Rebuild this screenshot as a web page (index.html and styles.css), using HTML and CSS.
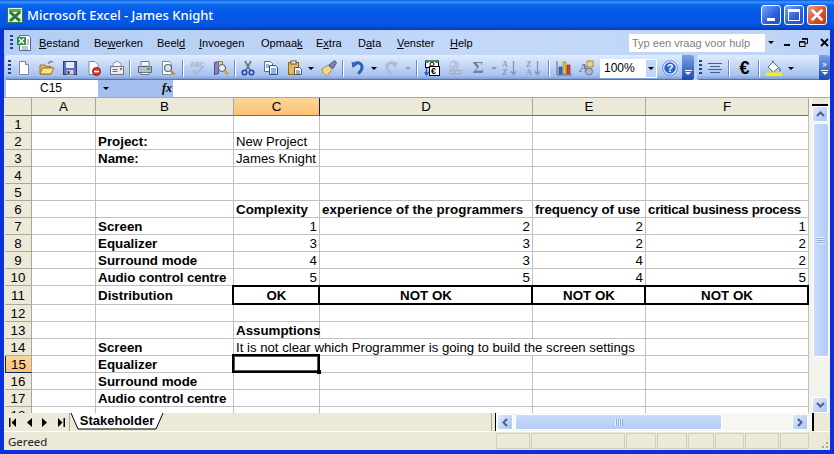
FILE: index.html
```html
<!DOCTYPE html>
<html lang="nl">
<head>
  <meta charset="UTF-8">
  <title>Microsoft Excel - James Knight</title>
  <link rel="stylesheet" href="styles.css">
</head>
<body>
  <div class="window">
    <div class="titlebar">
      <svg class="app-icon" viewBox="0 0 16 16"><rect x="0.5" y="0.5" width="15" height="15" fill="#e8f2e4" stroke="#2f7d3a"/><rect x="2" y="2" width="12" height="3" fill="#5aa85f"/><path d="M3 5l10 9M13 5L3 14" stroke="#1f7a35" stroke-width="3"/></svg>
      <span class="title-text">Microsoft Excel - James Knight</span>
      <div class="win-buttons">
        <div class="win-btn"><span class="glyph-min"></span></div>
        <div class="win-btn"><span class="glyph-max"></span></div>
        <div class="win-btn win-close"><svg viewBox="0 0 12 12" width="14" height="14"><path d="M1.5 1.5l9 9M10.5 1.5l-9 9" stroke="#fff" stroke-width="2.4"/></svg></div>
      </div>
    </div>

    <div class="client">
      <div class="menubar">
        <span class="grip"></span>
        <svg class="doc-icon" viewBox="0 0 16 18"><path d="M3.5 1.5h9l2 2v13h-11z" fill="#fff" stroke="#5a6a86"/><rect x="1" y="3" width="9" height="8" fill="#2f8f46"/><path d="M3 4.5l5 5M8 4.5l-5 5" stroke="#fff" stroke-width="1.4"/><path d="M6 13h6M6 15h6M11 6h2M11 8h2M11 10h2" stroke="#7d8ca8"/></svg>
        <nav class="menu">
          <span><u>B</u>estand</span>
          <span>Be<u>w</u>erken</span>
          <span>Beel<u>d</u></span>
          <span><u>I</u>nvoegen</span>
          <span>Opmaa<u>k</u></span>
          <span>E<u>x</u>tra</span>
          <span>D<u>a</u>ta</span>
          <span><u>V</u>enster</span>
          <span><u>H</u>elp</span>
        </nav>
        <div class="help-box">
          <span>Typ een vraag voor hulp</span>
          <span class="help-drop"><i class="dd"></i></span>
        </div>
        <div class="doc-buttons">
          <span class="doc-min"></span>
          <svg viewBox="0 0 9 9" width="9" height="9"><path d="M3 .5h5.500v5H6.500M.5 3.500h5.500v5h-5.500z" fill="none" stroke="#000"/><path d="M3 1h5.500M.5 4h5.500" stroke="#000" stroke-width="1.400"/></svg>
          <svg viewBox="0 0 9 9" width="9" height="9"><path d="M1 1l7 7M8 1l-7 7" stroke="#000" stroke-width="1.800"/></svg>
        </div>
      </div>

      <div class="toolbars">
        <div class="toolbar tb-standard">
          <span class="grip"></span>
          <!-- new -->
          <svg viewBox="0 0 16 16"><path d="M3.500 1.500h6l3 3v10h-9z" fill="#fff" stroke="#7f8aa0"/><path d="M9.500 1.500v3h3" fill="#d8deea" stroke="#7f8aa0"/></svg>
          <!-- open -->
          <svg viewBox="0 0 16 16"><path d="M1 5h5l1 1.500h5V14H1z" fill="#e6b95a" stroke="#9a7420"/><path d="M1 14l2.500-6H15l-3 6z" fill="#fbe08e" stroke="#9a7420"/><path d="M9 4c1-2 3-3 5-2" fill="none" stroke="#5a7fb8" stroke-width="1.300"/></svg>
          <!-- save -->
          <svg viewBox="0 0 16 16"><rect x="1.500" y="1.500" width="13" height="13" fill="#5d6fc0" stroke="#2d3a86"/><rect x="4" y="2" width="8" height="6" fill="#e6e9f6"/><rect x="4.500" y="10" width="7" height="4.500" fill="#d4d4d4"/><rect x="5.500" y="11" width="2" height="3" fill="#333"/></svg>
          <!-- permission -->
          <svg viewBox="0 0 16 16"><path d="M3 1.500h6l3 3v10H3z" fill="#fff" stroke="#7f8aa0"/><circle cx="10.500" cy="11.500" r="4" fill="#d8392b" stroke="#8e1c12"/><rect x="8" y="10.700" width="5" height="1.600" fill="#fff"/></svg>
          <!-- mail -->
          <svg viewBox="0 0 16 16"><path d="M4 7V3.500L8 1l4 2.500V7" fill="#f4f4f4" stroke="#8a93a5"/><rect x="1.500" y="6.500" width="13" height="8" fill="#e8ecf2" stroke="#6d7688"/><path d="M3.500 9.500h5M3.500 11.500h5" stroke="#5a6a90"/><rect x="11" y="8" width="2" height="2" fill="#d85040"/></svg>
          <span class="sep"></span>
          <!-- print -->
          <svg viewBox="0 0 16 16"><path d="M4 5V1.500h8V5" fill="#fff" stroke="#6d7688"/><path d="M1.500 6.500h13v6h-13z" fill="#b8c0cc" stroke="#5d6678"/><path d="M4 12.500h8v2H4z" fill="#fff" stroke="#6d7688"/><rect x="10" y="8" width="3" height="2" fill="#22b14c"/></svg>
          <!-- preview -->
          <svg viewBox="0 0 16 16"><path d="M2.500 1.500h7l2 2v11h-9z" fill="#fff" stroke="#7f8aa0"/><circle cx="8" cy="8" r="3.500" fill="#d6e6f6" stroke="#5d6678" stroke-width="1.200"/><path d="M10.500 10.500l4 4" stroke="#c98a2d" stroke-width="2.400"/></svg>
          <span class="sep"></span>
          <!-- spelling, disabled -->
          <svg viewBox="0 0 16 16"><text x="0" y="6.500" class="svg-abc">ABC</text><path d="M3 10l3 4 8-8" fill="none" stroke="#a9b6cf" stroke-width="2"/></svg>
          <!-- research -->
          <svg viewBox="0 0 16 16"><path d="M1.500 2.500l4-1v12l-4 1z" fill="#8d7fc0" stroke="#54488c"/><path d="M5.500 1.500h4v9h-4z" fill="#e9d78a" stroke="#8f7d3a"/><circle cx="9" cy="8" r="3.500" fill="#e6eef8" stroke="#4d5670"/><path d="M11.500 10.500l3.500 4" stroke="#d59b2d" stroke-width="2.200"/></svg>
          <span class="sep"></span>
          <!-- cut -->
          <svg viewBox="0 0 16 16"><path d="M5 1l5 9M11 1l-5 9" stroke="#6d7688" stroke-width="1.600"/><circle cx="4.500" cy="12.500" r="2.300" fill="none" stroke="#2b4aa8" stroke-width="1.600"/><circle cx="11.500" cy="12.500" r="2.300" fill="none" stroke="#2b4aa8" stroke-width="1.600"/></svg>
          <!-- copy -->
          <svg viewBox="0 0 16 16"><path d="M1.500 1.500h6l2 2v8h-8z" fill="#fff" stroke="#4d6ea8"/><path d="M6.500 5.500h6l2 2v7h-8z" fill="#fff" stroke="#1f4b98"/><path d="M8 9h5M8 11h5M8 13h5M3 5h3M3 7h3" stroke="#2f62b8"/></svg>
          <!-- paste -->
          <svg viewBox="0 0 16 16"><rect x="1.500" y="2.500" width="10" height="12" fill="#e4b75a" stroke="#8a6a20"/><rect x="4" y="1" width="5" height="3" fill="#f6f1de" stroke="#5d5d5d"/><path d="M7.500 7.500h5l2 2v5h-7z" fill="#fff" stroke="#4d5670"/><path d="M9 11h4M9 13h4" stroke="#4d5670"/></svg>
          <i class="dd"></i>
          <!-- format painter -->
          <svg viewBox="0 0 16 16"><path d="M1 9l6-4 4 4.500-4.500 6C3.500 15.500 1.500 12.500 1 9z" fill="#efd98c" stroke="#a98d3a"/><path d="M8 5l5.500-4.500 2 2-3.500 6z" fill="#7d84b8" stroke="#4a4f86"/></svg>
          <span class="sep"></span>
          <!-- undo -->
          <svg viewBox="0 0 16 16"><path d="M4.500 3.500c5-2 9 1 7 6-.6 1.500-2 3-3.500 4" fill="none" stroke="#2a62c0" stroke-width="3"/><path d="M1.500 1.500l1 6.500 5-3.500z" fill="#2a62c0"/></svg>
          <i class="dd"></i>
          <!-- redo, disabled -->
          <svg viewBox="0 0 16 16"><path d="M11.500 3.500c-5-2-9 1-7 6 .6 1.500 2 3 3.500 4" fill="none" stroke="#a9bcd8" stroke-width="3"/><path d="M14.500 1.500l-1 6.500-5-3.500z" fill="#a9bcd8"/></svg>
          <i class="dd dd-off"></i>
          <span class="sep"></span>
          <!-- euro conversion -->
          <svg viewBox="0 0 16 16"><rect x="1.500" y="1" width="13" height="6.500" fill="#fff" stroke="#000"/><rect x="1.500" y="1" width="3" height="2" fill="#12a844"/><rect x="11.500" y="1" width="3" height="2" fill="#12a844"/><circle cx="8" cy="4.200" r="2" fill="none" stroke="#000"/><rect x="5.500" y="6.500" width="10" height="9" fill="#fff" stroke="#000"/><text x="7" y="14" class="svg-euro-small">€</text><path d="M2.500 8v6M.5 12l2 3 2-3" fill="none" stroke="#1f4bd0" stroke-width="1.200"/></svg>
          <!-- hyperlink, disabled -->
          <svg viewBox="0 0 16 16"><circle cx="7" cy="5.500" r="5" fill="#b6c3d8"/><circle cx="5.500" cy="4" r="1.500" fill="#d8e0ec"/><rect x="2.500" y="10.500" width="6" height="3.500" rx="1.700" fill="none" stroke="#a3b1c9" stroke-width="1.300"/><rect x="8" y="10.500" width="6.500" height="3.500" rx="1.700" fill="none" stroke="#a3b1c9" stroke-width="1.300"/></svg>
          <span class="tb-sym">Σ</span>
          <i class="dd dd-off"></i>
          <!-- sort a-z -->
          <svg viewBox="0 0 16 16"><text x="0" y="7" class="svg-sort">A</text><text x="0" y="15" class="svg-sort">Z</text><path d="M11.500 1v13M9 11.500l2.500 3 2.500-3" fill="none" stroke="#8094b8" stroke-width="1.300"/></svg>
          <span class="spacer"></span>
          <!-- sort z-a -->
          <svg viewBox="0 0 16 16"><text x="0" y="7" class="svg-sort">Z</text><text x="0" y="15" class="svg-sort">A</text><path d="M11.500 1v13M9 11.500l2.500 3 2.500-3" fill="none" stroke="#8094b8" stroke-width="1.300"/></svg>
          <span class="sep"></span>
          <!-- chart -->
          <svg viewBox="0 0 16 16"><path d="M1 1v14h15" fill="none" stroke="#5d6678"/><rect x="3" y="7" width="3" height="7" fill="#3a66c8" stroke="#1f3a88" stroke-width=".6"/><rect x="7" y="2" width="3" height="12" fill="#e8c23a" stroke="#8f7420" stroke-width=".6"/><rect x="11" y="5" width="3" height="9" fill="#d8402b" stroke="#86201a" stroke-width=".6"/></svg>
          <!-- drawing -->
          <svg viewBox="0 0 16 16"><path d="M9 1h6v6H9z" fill="#e8d48a" stroke="#a08c3a"/><text x="1" y="12" class="svg-draw">A</text><circle cx="11" cy="11.500" r="3.500" fill="#aeb8cc" stroke="#6d7688"/></svg>
          <div class="zoom-box"><span>100%</span><span class="zoom-drop"><i class="dd"></i></span></div>
          <!-- help -->
          <svg viewBox="0 0 16 16"><circle cx="8" cy="8" r="7.300" fill="#fff" stroke="#5a86d8"/><circle cx="8" cy="8" r="5.800" fill="#2b62d0"/><text x="8" y="12" text-anchor="middle" class="svg-help">?</text></svg>
          <span class="chevron"><i class="bar"></i><i class="dd dd-white"></i></span>
        </div>
        <div class="toolbar tb-format">
          <span class="grip"></span>
          <!-- align -->
          <svg viewBox="0 0 16 16"><path d="M1 3.500h14M3 6.500h10M1 9.500h14M3 12.500h10" stroke="#4a5f90"/></svg>
          <span class="sep"></span>
          <span class="tb-euro">€</span>
          <span class="sep"></span>
          <!-- fill colour -->
          <svg viewBox="0 0 16 16"><path d="M2 7l5-5 5.500 5.500-5 4.500z" fill="#fff" stroke="#5d6678"/><path d="M7 2l-.5-1.500M13 8c1 1.500 1.500 2.500 1 3.500" fill="none" stroke="#3a66c8" stroke-width="1.300"/><rect x="0" y="12.500" width="16" height="3.500" fill="#f8f000"/></svg>
          <i class="dd"></i>
          <span class="chevron chevron-end"><i class="arrows">»</i><i class="bar"></i><i class="dd dd-white"></i></span>
        </div>
      </div>

      <div class="formula-bar">
        <div class="name-box">C15</div>
        <span class="name-drop"><i class="dd"></i></span>
        <span class="fx">fx</span>
        <div class="formula-input"></div>
      </div>

      <div class="sheet">
        <div class="grid-wrap">
          <table class="grid">
            <colgroup>
              <col class="c-head"><col class="c-a"><col class="c-b"><col class="c-c"><col class="c-d"><col class="c-e"><col class="c-f">
            </colgroup>
            <thead>
              <tr><th></th><th>A</th><th>B</th><th class="active">C</th><th>D</th><th>E</th><th>F</th></tr>
            </thead>
            <tbody>
              <tr><th>1</th><td></td><td></td><td></td><td></td><td></td><td></td></tr>
              <tr><th>2</th><td></td><td class="b">Project:</td><td>New Project</td><td></td><td></td><td></td></tr>
              <tr><th>3</th><td></td><td class="b">Name:</td><td>James Knight</td><td></td><td></td><td></td></tr>
              <tr><th>4</th><td></td><td></td><td></td><td></td><td></td><td></td></tr>
              <tr><th>5</th><td></td><td></td><td></td><td></td><td></td><td></td></tr>
              <tr><th>6</th><td></td><td></td><td class="b">Complexity</td><td class="b wide">experience of the programmers</td><td class="b tight">frequency of use</td><td class="b tighter">critical business process</td></tr>
              <tr><th>7</th><td></td><td class="b">Screen</td><td class="n">1</td><td class="n">2</td><td class="n">2</td><td class="n">1</td></tr>
              <tr><th>8</th><td></td><td class="b">Equalizer</td><td class="n">3</td><td class="n">3</td><td class="n">2</td><td class="n">2</td></tr>
              <tr><th>9</th><td></td><td class="b">Surround mode</td><td class="n">4</td><td class="n">3</td><td class="n">4</td><td class="n">2</td></tr>
              <tr><th>10</th><td></td><td class="b tight">Audio control centre</td><td class="n">5</td><td class="n">5</td><td class="n">4</td><td class="n">5</td></tr>
              <tr class="tall"><th>11</th><td></td><td class="b">Distribution</td><td class="b box">OK</td><td class="b box">NOT OK</td><td class="b box">NOT OK</td><td class="b box">NOT OK</td></tr>
              <tr><th>12</th><td></td><td></td><td></td><td></td><td></td><td></td></tr>
              <tr><th>13</th><td></td><td></td><td class="b">Assumptions</td><td></td><td></td><td></td></tr>
              <tr><th>14</th><td></td><td class="b">Screen</td><td colspan="3">It is not clear which Programmer is going to build the screen settings</td><td></td></tr>
              <tr><th class="active">15</th><td></td><td class="b">Equalizer</td><td class="selected"></td><td></td><td></td><td></td></tr>
              <tr><th>16</th><td></td><td class="b">Surround mode</td><td></td><td></td><td></td><td></td></tr>
              <tr><th>17</th><td></td><td class="b tight">Audio control centre</td><td></td><td></td><td></td><td></td></tr>
              <tr><th>18</th><td></td><td></td><td></td><td></td><td></td><td></td></tr>
            </tbody>
          </table>
        </div>
        <div class="vscroll">
          <span class="split-v"></span>
          <span class="sb-btn"><svg viewBox="0 0 9 6" width="9" height="6"><path d="M1 5l3.500-3.500L8 5" fill="none" stroke="#4d6185" stroke-width="2"/></svg></span>
          <div class="sb-track-v">
            <div class="sb-thumb-v"><i class="ridges-h"></i></div>
          </div>
          <span class="sb-btn"><svg viewBox="0 0 9 6" width="9" height="6"><path d="M1 1l3.500 3.500L8 1" fill="none" stroke="#4d6185" stroke-width="2"/></svg></span>
        </div>
      </div>

      <div class="tabs">
        <div class="tab-nav">
          <svg viewBox="0 0 7 9" width="7" height="9"><path d="M0 0h1.500v9H0zM7 0v9L2.500 4.500z"/></svg>
          <svg viewBox="0 0 5 9" width="5" height="9"><path d="M5 0v9L0 4.500z"/></svg>
          <svg viewBox="0 0 5 9" width="5" height="9"><path d="M0 0v9l5-4.500z"/></svg>
          <svg viewBox="0 0 7 9" width="7" height="9"><path d="M5.500 0H7v9H5.500zM0 0v9l4.500-4.500z"/></svg>
        </div>
        <div class="tab">
          <svg class="tab-edge" viewBox="0 0 94 17" width="94" height="17"><path d="M1 0l7 16h78l7-16" fill="#fff" stroke="#000"/></svg>
          <span>Stakeholder</span>
        </div>
        <span class="tab-rest"></span>
        <span class="split-h"></span>
        <div class="hscroll">
          <span class="sb-btn"><svg viewBox="0 0 6 9" width="6" height="9"><path d="M5 1L1.500 4.500 5 8" fill="none" stroke="#4d6185" stroke-width="2"/></svg></span>
          <div class="sb-track-h">
            <div class="sb-thumb-h"><i class="ridges-v"></i></div>
          </div>
          <span class="sb-btn"><svg viewBox="0 0 6 9" width="6" height="9"><path d="M1 1l3.500 3.500L1 8" fill="none" stroke="#4d6185" stroke-width="2"/></svg></span>
        </div>
        <span class="corner-line"></span>
      </div>

      <div class="statusbar">
        <span class="status-text">Gereed</span>
        <div class="panels">
          <span></span><span></span><span></span><span></span><span></span><span></span><span></span><span></span>
        </div>
        <i class="size-grip"></i>
      </div>
    </div>
  </div>
</body>
</html>
```

FILE: styles.css
```css
* { box-sizing: border-box; }
body { margin: 0; font-family: "Noto Sans", sans-serif; font-size: 11px; color: #000; overflow: hidden; }
i { display: block; font-style: normal; }
svg { display: block; }

.window { width: 834px; height: 454px; display: flex; flex-direction: column; background: #0831d9; overflow: hidden; }

/* title bar */
.titlebar { height: 30px; flex: none; display: flex; align-items: center; padding: 0 7px; background: linear-gradient(#0a5ae0 0, #3d95ff 2px, #0a64ec 5px, #0558e6 14px, #0556e4 24px, #0449cf 28px, #0336b4 30px); }
.app-icon { width: 16px; height: 16px; margin-right: 4px; }
.title-text { color: #fff; font-family: "Noto Sans", sans-serif; font-size: 13px; font-weight: 500; }
.win-buttons { margin-left: auto; display: flex; gap: 3px; }
.win-btn { width: 20px; height: 20px; border: 1px solid #fff; border-radius: 3px; background: linear-gradient(135deg, #7ea6f5, #2a5de0 60%, #2350d0); display: flex; align-items: center; justify-content: center; position: relative; }
.win-close { background: linear-gradient(135deg, #ef9a7e, #da4c26 60%, #c8381a); }
.glyph-min { width: 8px; height: 3px; background: #fff; position: absolute; left: 5px; bottom: 3px; }
.glyph-max { width: 12px; height: 12px; border: 1px solid #fff; border-top-width: 3px; }

.client { flex: 1; min-height: 0; margin: 0 4px 4px; display: flex; flex-direction: column; background: #c3daf9; }

/* menu bar */
.menubar { height: 25px; flex: none; display: flex; align-items: center; background: linear-gradient(90deg, #b4cdf4, #c4d9f9 60%, #bcd3f7); }
.grip { width: 3px; height: 16px; background: repeating-linear-gradient(#27418a 0 2px, transparent 2px 4px); }
.menubar .grip { margin-left: 6px; height: 15px; }
.doc-icon { width: 16px; height: 18px; margin-left: 3px; }
.menu { display: grid; grid-template-columns: 55px 63px 42px 62px 55px 42px 39px 53px 40px; margin-left: 7px; font-family: "Liberation Sans", sans-serif; font-size: 11px; white-space: nowrap; }
.menu u { text-underline-offset: 1px; }
.help-box { width: 148px; height: 18px; margin-left: 139px; background: #fff; display: flex; align-items: center; justify-content: space-between; padding-left: 3px; color: #7f7f7f; font-family: "Liberation Sans", sans-serif; font-size: 11px; white-space: nowrap; }
.help-drop { width: 12px; height: 18px; background: #c3d6f6; display: flex; align-items: center; justify-content: center; }
.doc-buttons { display: flex; align-items: center; gap: 6px; margin-left: 7px; }
.doc-min { width: 6px; height: 2px; background: #000; margin-top: 5px; margin-right: 3px; }
.doc-buttons svg:last-child { margin-left: 6px; }

.dd { width: 0; height: 0; border: 3px solid transparent; border-top-color: #000; border-bottom-width: 0; border-left-width: 3.500px; border-right-width: 3.500px; justify-self: center; }
.dd-off { border-top-color: #8a98b0; }
.dd-white { border-top-color: #fff; }

/* toolbars */
.toolbars { height: 25px; flex: none; display: flex; padding-left: 1px; background: linear-gradient(90deg, #a9c4f0, #c4d9f9 50%, #b4cdf4); }
.toolbar { height: 25px; align-items: center; border-radius: 3px; background: linear-gradient(#e2ecfc, #c6d9f8 40%, #a7c2ee 85%, #7f9fd8); border-bottom: 1px solid #4f74b8; }
.tb-standard { width: 690px; display: grid; grid-template-columns: 7px 23px 23px 24px 24px 21px 6px 23px 24px 6px 23px 23px 5px 21px 25px 23px 10px 26px 2px 28px 4px 30px 4px 14px 16px 30px 16px 16px 16px 8px 16px 14px 16px 28px 57px 25px 12px; justify-items: center; }
.tb-standard > svg { width: 16px; height: 16px; }
.tb-standard > .grip { justify-self: start; margin-left: 3px; }
.sep { width: 2px; height: 17px; border-left: 1px solid #6a8ccb; border-right: 1px solid #fff; }
.spacer { width: 8px; }
.tb-sym { font-family: "Liberation Serif", serif; font-size: 17px; font-weight: 700; color: #6d80a8; line-height: 16px; }
.svg-abc { font: 700 6.500px "Liberation Sans", sans-serif; fill: #a9b0c0; }
.svg-sort { font: 700 8px "Liberation Serif", serif; fill: #8a9abb; }
.svg-euro-small { font: 700 9px "Liberation Sans", sans-serif; fill: #000; }
.svg-draw { font: 700 13px "Liberation Serif", serif; fill: #6a70a8; }
.svg-help { font: 700 11px "Liberation Sans", sans-serif; fill: #fff; }
.zoom-box { width: 57px; height: 19px; background: #fff; display: flex; align-items: center; justify-content: space-between; padding-left: 4px; font-family: "Liberation Sans", sans-serif; font-size: 12px; }
.zoom-drop { width: 12px; height: 19px; background: #c3d6f6; border: 1px solid #fff; display: flex; align-items: center; justify-content: center; }
.chevron { width: 12px; height: 25px; margin-bottom: 1px; background: linear-gradient(#7ba2e7, #1b4ab0); border-radius: 0 3px 3px 0; display: flex; flex-direction: column; align-items: center; justify-content: flex-end; gap: 1px; padding-bottom: 5px; }
.chevron-end { width: 11px; grid-column: 9; }
.bar { width: 7px; height: 1px; background: #fff; }
.tb-format { width: 133px; margin-left: 3px; display: grid; grid-template-columns: 7px 22px 6px 25px 4px 26px 8px 24px 11px; justify-items: center; }
.tb-format > .grip { margin-left: 2px; justify-self: start; }
.tb-format > svg { width: 16px; height: 16px; }
.tb-euro { font-family: "Liberation Sans", sans-serif; font-size: 18px; font-weight: 700; line-height: 16px; }
.arrows { color: #fff; font-size: 9px; line-height: 8px; margin-bottom: 1px; }

/* formula bar */
.formula-bar { height: 18px; flex: none; display: flex; background: #a4bfef; border-bottom: 1px solid #aca899; }
.name-box { width: 92px; margin-left: 2px; background: #fff; text-align: center; font-family: "Liberation Sans", sans-serif; font-size: 12px; line-height: 17px; padding-right: 2px; }
.name-drop { width: 16px; display: flex; align-items: center; justify-content: center; margin-left: 0; }
.fx { width: 59px; text-align: right; padding-right: 1px; font-family: "Liberation Serif", serif; font-style: italic; font-weight: 700; font-size: 12px; line-height: 17px; }
.formula-input { flex: 1; background: #fff; }

/* sheet */
.sheet { height: 315px; flex: none; display: flex; background: #fff; }
.grid-wrap { width: 805px; height: 315px; overflow: hidden; background: #ece9d8; padding-left: 1px; }
.grid { table-layout: fixed; width: 804px; border-collapse: separate; border-spacing: 0; font-family: "Liberation Sans", sans-serif; font-size: 13.330px; background: #fff; }
.c-head { width: 27px; }
.c-a { width: 64px; }
.c-b { width: 138px; }
.c-c { width: 86px; }
.c-d { width: 213px; }
.c-e { width: 113px; }
.c-f { width: 163px; }
.grid tr { height: 17px; }
.grid tr.tall { height: 19px; }
.grid thead tr { height: 18px; }
.grid th, .grid td { padding: 0; height: inherit; line-height: 15px; white-space: nowrap; }
.grid th { font-weight: 400; text-align: center; background: #ece9d8; border-right: 1px solid #aca899; border-bottom: 1px solid #aca899; }
.grid thead th { border-bottom-color: #716f64; }
.grid th.active { background: linear-gradient(#f9d79b, #ffc071); }
.grid thead th.active { border-right-color: #0a246a; }
.grid tbody th.active { border-left: 1px solid #0a246a; border-bottom-color: #0a246a; }
.grid td { border-right: 1px solid #c0c0c0; border-bottom: 1px solid #c0c0c0; padding: 0 2px; font-size: 13.200px; }
.grid td.b { font-weight: 700; font-size: 13.330px; }
.grid td.wide { letter-spacing: .07px; }
.grid td.tight { letter-spacing: -.1px; }
.grid td.tighter { letter-spacing: -.25px; }
.grid td.n { text-align: right; font-size: 13.330px; }
.grid td.box { text-align: center; position: relative; }
.grid td.box::after { content: ""; position: absolute; left: -2px; right: -1px; top: -1px; bottom: -1px; border: 2px solid #000; }
.grid td.selected { position: relative; }
.grid td.selected::after { content: ""; position: absolute; left: -2px; right: -1px; top: -2px; bottom: -1px; border: 2px solid #000; outline: 1px solid #555; outline-offset: -3px; }
.grid td.selected::before { content: ""; position: absolute; right: -2px; bottom: -2px; width: 4px; height: 4px; background: #000; z-index: 1; }

/* scrollbars */
.vscroll { width: 21px; height: 315px; display: flex; flex-direction: column; align-items: center; background: #f4f4ee; padding-left: 1px; }
.split-v { width: 16px; height: 8px; flex: none; background: #ece9d8; border-bottom: 2px solid #000; margin-bottom: 0; }
.sb-btn { width: 16px; height: 16px; flex: none; border: 1px solid #fff; border-radius: 2px; background: linear-gradient(135deg, #dfe9fd, #a9c4f5); display: flex; align-items: center; justify-content: center; }
.sb-track-v { flex: 1; width: 17px; padding-top: 1px; }
.sb-thumb-v { width: 16px; height: 234px; border: 1px solid #fff; border-radius: 2px; background: linear-gradient(90deg, #c9dafc, #b5cbf7); display: flex; align-items: center; justify-content: center; margin-left: 1px; }
.ridges-h { width: 8px; height: 7px; background: repeating-linear-gradient(#eef3fe 0 1px, #8aa6da 1px 2px); }

.tabs { height: 18px; flex: none; display: flex; align-items: stretch; background: #ece9d8; }
.tab-nav { width: 66px; margin-right: 0; padding: 0 4px 0 5px; display: flex; align-items: center; justify-content: space-between; border-right: 1px solid #aca899; }
.tab-nav svg { fill: #000; }
.tab { width: 94px; height: 17px; position: relative; font-family: "Liberation Sans", sans-serif; font-size: 13px; font-weight: 700; line-height: 16px; text-align: center; }
.tab-edge { position: absolute; left: 0; top: 0; }
.tab span { position: relative; }
.tab-rest { width: 327px; }
.split-h { width: 5px; background: #ece9d8; border-left: 1px solid #aca899; border-right: 1px solid #000; }
.hscroll { width: 316px; display: flex; align-items: center; background: #f7f7f2; padding: 0 4px 0 1px; }
.sb-track-h { flex: 1; height: 16px; padding-left: 2px; }
.sb-thumb-h { width: 207px; height: 16px; border: 1px solid #fff; border-radius: 2px; background: linear-gradient(#c9dafc, #b5cbf7); display: flex; align-items: center; justify-content: center; }
.ridges-v { width: 8px; height: 7px; background: repeating-linear-gradient(90deg, #eef3fe 0 1px, #8aa6da 1px 2px); }
.corner-line { width: 2px; background: #000; }

/* status bar */
.statusbar { height: 19px; flex: none; display: flex; align-items: center; position: relative; background: #ece9d8; border-top: 1px solid #fff; padding-left: 4px; font-family: "Noto Sans", sans-serif; font-size: 11.500px; }
.status-text { width: 488px; color: #222; }
.panels { display: grid; grid-template-columns: 35px 95px 31px 31px 27px 30px 35px 30px; height: 16px; }
.panels span { border: 1px solid #d0cdbd; border-right-color: #d0cdbd; margin-right: 1px; }
.size-grip { position: absolute; right: 1px; bottom: 1px; width: 11px; height: 11px; background: radial-gradient(circle at 1px 1px, #a8a596 1px, transparent 1px) 0 0 / 4px 4px; clip-path: polygon(100% 0, 100% 100%, 0 100%); }
```
